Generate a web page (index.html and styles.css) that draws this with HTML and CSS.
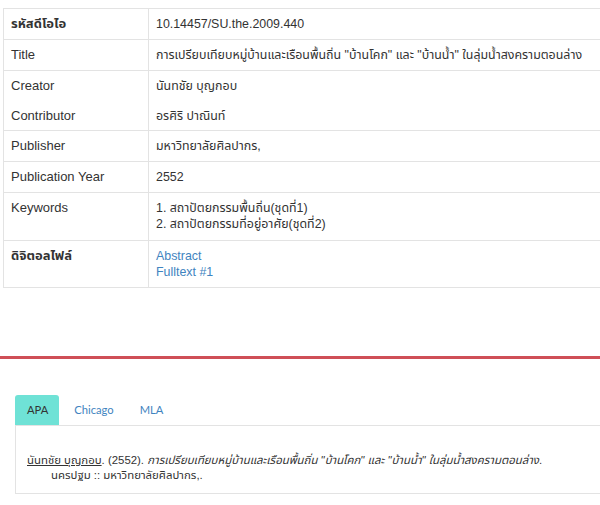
FILE: index.html
```html
<!DOCTYPE html>
<html lang="th">
<head>
<meta charset="utf-8">
<link rel="stylesheet" href="styles.css">
</head>
<body>
<div class="page">
  <table class="meta">
    <tr class="bt"><th class="thai">รหัสดีโอไอ</th><td>10.14457/SU.the.2009.440</td></tr>
    <tr class="bt"><th>Title</th><td>การเปรียบเทียบหมู่บ้านและเรือนพื้นถิ่น "บ้านโคก" และ "บ้านน้ำ" ในลุ่มน้ำสงครามตอนล่าง</td></tr>
    <tr class="bt"><th>Creator</th><td>นันทชัย บุญกอบ</td></tr>
    <tr><th>Contributor</th><td>อรศิริ ปาณินท์</td></tr>
    <tr class="bt"><th>Publisher</th><td>มหาวิทยาลัยศิลปากร,</td></tr>
    <tr class="bt"><th>Publication Year</th><td>2552</td></tr>
    <tr class="bt tall"><th>Keywords</th><td>1. สถาปัตยกรรมพื้นถิ่น(ชุดที่1)<br>2. สถาปัตยกรรมที่อยู่อาศัย(ชุดที่2)</td></tr>
    <tr class="bt tall"><th class="thai">ดิจิตอลไฟล์</th><td><a href="#">Abstract</a><br><a href="#">Fulltext #1</a></td></tr>
  </table>

  <div class="rule"></div>

  <div class="cite">
    <ul class="tabs">
      <li class="tab active">APA</li>
      <li class="tab"><a href="#">Chicago</a></li>
      <li class="tab"><a href="#">MLA</a></li>
    </ul>
    <div class="panel">
      <p class="ref"><u>นันทชัย บุญกอบ</u>. (2552). <i>การเปรียบเทียบหมู่บ้านและเรือนพื้นถิ่น "บ้านโคก" และ "บ้านน้ำ" ในลุ่มน้ำสงครามตอนล่าง</i>. นครปฐม :: มหาวิทยาลัยศิลปากร,.</p>
    </div>
  </div>
</div>
</body>
</html>
```

FILE: styles.css
```css
html, body {
  margin: 0;
  padding: 0;
  background: #fff;
  overflow: hidden;
}
body {
  font-family: "Liberation Sans", "Noto Sans Thai", sans-serif;
  font-size: 13px;
  color: #333;
}
.page {
  width: 640px;
  padding-top: 8px;
}
.meta {
  margin-left: 3px;
  width: 640px;
  border-collapse: collapse;
  border: 1px solid #e3e3e3;
}
.meta th, .meta td {
  text-align: left;
  vertical-align: top;
  font-weight: normal;
  padding: 7px 7px 0;
  height: 22.85px;
  line-height: 16px;
}
.meta td {
  font-size: 12.4px;
}
.meta th {
  width: 130px;
  border-right: 1px solid #e3e3e3;
}
.meta th.thai {
  font-weight: bold;
}
.meta tr.bt th, .meta tr.bt td {
  border-top: 1px solid #e3e3e3;
}
.meta tr.tall td, .meta tr.tall th {
  height: 39.5px;
}
.meta a {
  color: #3f84c0;
  text-decoration: none;
}
.rule {
  margin-top: 68px;
  height: 3px;
  background: #cf4f57;
}
.cite {
  margin: 36px 0 0 15px;
}
.tabs {
  list-style: none;
  margin: 0;
  padding: 0;
  display: flex;
  gap: 3px;
  height: 30px;
  font-family: "Lato", "Liberation Sans", sans-serif;
  font-size: 11.2px;
}
.tab {
  padding: 0 11px 0 12px;
  line-height: 30px;
  border-radius: 3px 3px 0 0;
}
.tab a {
  color: #3f84c0;
  text-decoration: none;
}
.tab.active {
  background: #6fe2d6;
  color: #333;
}
.panel {
  border: 1px solid #e3e3e3;
  width: 640px;
  height: 69px;
  box-sizing: border-box;
  padding: 27px 11px 0;
}
.ref {
  margin: 0;
  padding-left: 24px;
  text-indent: -24px;
  line-height: 15px;
  font-size: 11.4px;
  width: 518px;
}
```
